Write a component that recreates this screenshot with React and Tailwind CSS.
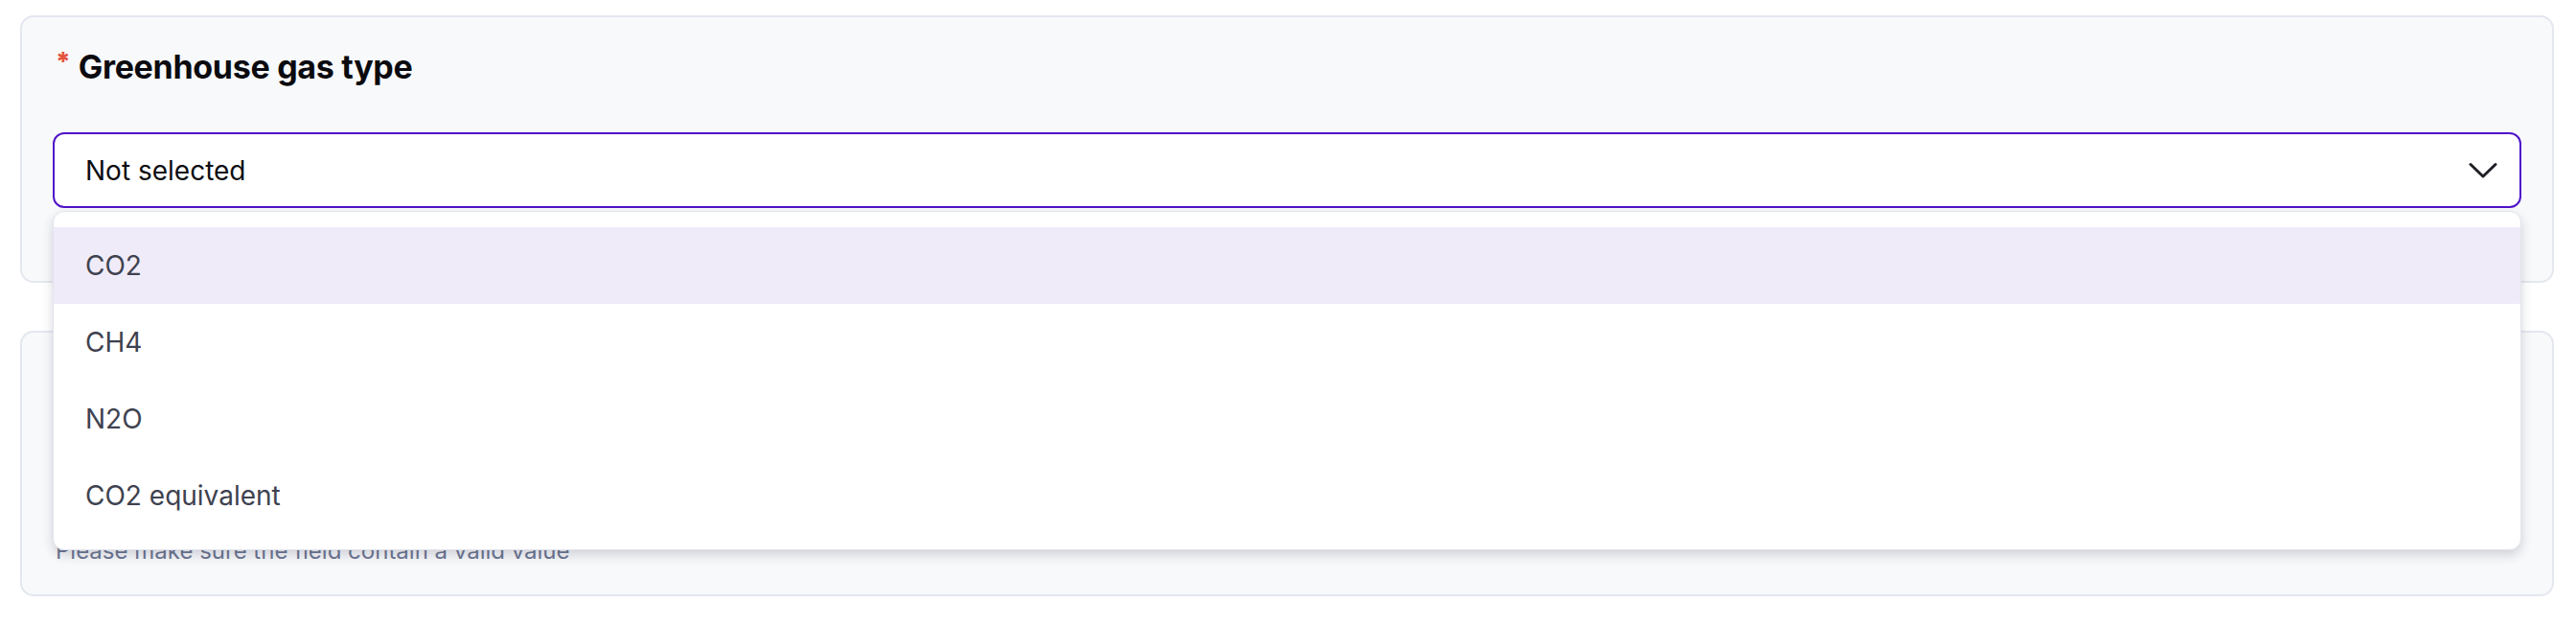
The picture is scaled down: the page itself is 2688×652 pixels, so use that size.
const options = ['CO2', 'CH4', 'N2O', 'CO2 equivalent'];

const Chevron = () => (
  <svg width="30" height="18" viewBox="0 0 30 18" fill="none" stroke="#1f2026" strokeWidth="3" strokeLinecap="round" strokeLinejoin="round">
    <path d="M2 2.5 L15 15 L28 2.5" />
  </svg>
);

export default function App() {
  return (
    <div className="min-h-screen bg-white pt-4 pl-[21px] pr-[23px] font-['Inter',sans-serif]">
      <div className="flex flex-col gap-[50px]">
        {/* Greenhouse gas type field */}
        <div className="h-[279px] rounded-[14px] border-2 border-[#e4e7ef] bg-[#f8f9fb] px-8 pt-[31px]">
          <div className="ml-[3px] flex h-[40px] items-center">
            <span className="mr-[8px] -mt-[10px] text-[27px] font-extrabold leading-none text-[#e5533d]">*</span>
            <span className="text-[34px] font-bold tracking-[-0.3px] text-[#0b0b0f]">Greenhouse gas type</span>
          </div>

          <div className="relative mt-[49px]">
            <div className="flex h-[79px] items-center justify-between rounded-[12px] border-2 border-[#5014c8] bg-white pl-[32px] pr-[23px]">
              <span className="text-[28px] text-[#0d0d12]">Not selected</span>
              <Chevron />
            </div>

            {/* open listbox */}
            <div className="absolute left-0 right-0 top-full z-10 mt-[3px] rounded-[12px] border border-[#e2e4ec] bg-white py-4 shadow-[0_5px_12px_rgba(30,34,60,0.18)]">
              {options.map((opt, i) => (
                <div
                  key={opt}
                  className={`flex h-[80px] items-center pl-[33px] text-[28px] text-[#3e424f] ${i === 0 ? 'bg-[#f0ebf8]' : ''}`}
                >
                  {opt}
                </div>
              ))}
            </div>
          </div>
        </div>

        {/* next field, mostly covered by the listbox */}
        <div className="flex h-[277px] flex-col justify-end rounded-[14px] border-2 border-[#e4e7ef] bg-[#f8f9fb] pb-[29px] pl-[35px]">
          <p className="text-[24px] leading-[32px] text-[#6e7793]">Please make sure the field contain a valid value</p>
        </div>
      </div>
    </div>
  );
}
